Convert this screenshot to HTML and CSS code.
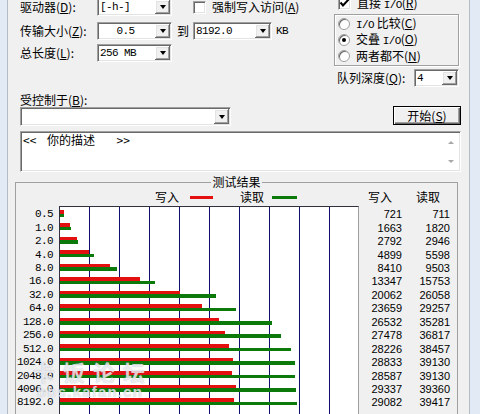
FILE: index.html
```html
<!DOCTYPE html>
<html>
<head>
<meta charset="utf-8">
<link rel="stylesheet" href="styles.css">
</head>
<body>
<div class="window">
  <div class="edge-l"></div>
  <div class="client">
    <div class="top">
      <div class="top-left">
        <div class="row">
          <span class="lbl">驱动器(<u>D</u>):</span>
          <div class="combo w75"><span class="val mono">[-h-]</span><span class="dd"></span></div>
          <label class="chk force"><span class="box"></span><span>强制写入访问(<u>A</u>)</span></label>
        </div>
        <div class="row r2">
          <span class="lbl">传输大小(<u>Z</u>):</span>
          <div class="combo w75"><span class="val mono center">0.5</span><span class="dd"></span></div>
          <span class="to">到</span>
          <div class="combo w79"><span class="val mono">8192.0</span><span class="dd"></span></div>
          <span class="kb mono">KB</span>
        </div>
        <div class="row r3">
          <span class="lbl">总长度(<u>L</u>):</span>
          <div class="combo w75"><span class="val mono">256 MB</span><span class="dd"></span></div>
        </div>
      </div>
      <div class="top-right">
        <label class="chk direct"><span class="box"><svg width="11" height="11" viewBox="0 0 11 11"><polyline points="1.5,4.5 4,7.5 9.5,1.5" fill="none" stroke="#000" stroke-width="2"/></svg></span><span>直接 <span class="mono">I/O</span>(<u>R</u>)</span></label>
        <div class="group">
          <div class="radio-row"><span class="radio"></span><span><span class="mono">I/O</span> 比较(<u>C</u>)</span></div>
          <div class="radio-row"><span class="radio on"></span><span>交叠 <span class="mono">I/O</span>(<u>O</u>)</span></div>
          <div class="radio-row"><span class="radio"></span><span>两者都不(<u>N</u>)</span></div>
        </div>
        <div class="queue">
          <span>队列深度(<u>Q</u>):</span>
          <div class="combo w45"><span class="val mono">4</span><span class="dd"></span></div>
        </div>
      </div>
    </div>

    <div class="ctl-label">受控制于(<u>B</u>):</div>
    <div class="ctl-row">
      <div class="combo w211"><span class="val"></span><span class="dd"></span></div>
      <div class="btn">开始(<u>S</u>)</div>
    </div>

    <div class="desc">
      <div class="desc-text">&lt;&lt;&nbsp;&nbsp;&nbsp;&nbsp;你的描述&nbsp;&nbsp;&nbsp;&nbsp;&nbsp;&nbsp;&nbsp;&nbsp;&gt;&gt;</div>
      <div class="vscroll"><span class="up"></span><span class="down"></span></div>
    </div>

    <fieldset class="results-box">
      <legend>测试结果</legend>
      <div class="hdr">
        <div class="hdr-lbl"></div>
        <div class="legend-row">
          <span>写入</span><span class="line w"></span>
          <span class="rd">读取</span><span class="line r"></span>
        </div>
        <div class="hdr-val">写入</div>
        <div class="hdr-val2">读取</div>
      </div>
      <div class="results">
        <div class="col-lbl mono">
          <div>0.5</div><div>1.0</div><div>2.0</div><div>4.0</div><div>8.0</div>
          <div>16.0</div><div>32.0</div><div>64.0</div><div>128.0</div><div>256.0</div>
          <div>512.0</div><div>1024.0</div><div>2048.0</div><div>4096.0</div><div>8192.0</div>
        </div>
        <div class="chart">
          <div class="bars"><i class="w" style="width:4.33px"></i><i class="r" style="width:4.27px"></i></div>
          <div class="bars"><i class="w" style="width:9.98px"></i><i class="r" style="width:10.92px"></i></div>
          <div class="bars"><i class="w" style="width:16.75px"></i><i class="r" style="width:17.68px"></i></div>
          <div class="bars"><i class="w" style="width:29.39px"></i><i class="r" style="width:33.59px"></i></div>
          <div class="bars"><i class="w" style="width:50.46px"></i><i class="r" style="width:57.02px"></i></div>
          <div class="bars"><i class="w" style="width:80.08px"></i><i class="r" style="width:94.52px"></i></div>
          <div class="bars"><i class="w" style="width:120.37px"></i><i class="r" style="width:156.35px"></i></div>
          <div class="bars"><i class="w" style="width:141.95px"></i><i class="r" style="width:175.54px"></i></div>
          <div class="bars"><i class="w" style="width:159.19px"></i><i class="r" style="width:211.69px"></i></div>
          <div class="bars"><i class="w" style="width:164.87px"></i><i class="r" style="width:220.9px"></i></div>
          <div class="bars"><i class="w" style="width:169.36px"></i><i class="r" style="width:230.74px"></i></div>
          <div class="bars"><i class="w" style="width:173px"></i><i class="r" style="width:234.78px"></i></div>
          <div class="bars"><i class="w" style="width:171.52px"></i><i class="r" style="width:234.78px"></i></div>
          <div class="bars"><i class="w" style="width:176.02px"></i><i class="r" style="width:236.16px"></i></div>
          <div class="bars"><i class="w" style="width:174.49px"></i><i class="r" style="width:236.5px"></i></div>
        </div>
        <div class="col-val">
          <div>721</div><div>1663</div><div>2792</div><div>4899</div><div>8410</div>
          <div>13347</div><div>20062</div><div>23659</div><div>26532</div><div>27478</div>
          <div>28226</div><div>28833</div><div>28587</div><div>29337</div><div>29082</div>
        </div>
        <div class="col-val col-val2">
          <div>711</div><div>1820</div><div>2946</div><div>5598</div><div>9503</div>
          <div>15753</div><div>26058</div><div>29257</div><div>35281</div><div>36817</div>
          <div>38457</div><div>39130</div><div>39130</div><div>39360</div><div>39417</div>
        </div>
      </div>
    </fieldset>
  </div>
  <div class="edge-r"></div>
  <div class="watermark">
    <div class="wm-cn">卡饭论坛</div>
    <div class="wm-en">bbs.kafan.cn</div>
  </div>
</div>
</body>
</html>
```

FILE: styles.css
```css
* { box-sizing: border-box; }
html, body { margin: 0; padding: 0; }
body {
  width: 480px; height: 414px; overflow: hidden;
  background: #f0f0f0;
  font-family: "Noto Sans CJK SC", "Liberation Sans", sans-serif;
  font-size: 12px; color: #000;
}
u { text-decoration: underline; text-underline-offset: 1px; }
.mono { font-family: "Liberation Mono", "Noto Sans CJK SC", monospace; font-size: 11px; letter-spacing: -0.6px; }

.window { display: flex; height: 414px; position: relative; overflow: hidden; }
.edge-l { flex: none; width: 8px; background: #e2eaf5; border-right: 1px solid #b4bcc8; }
.edge-r { flex: none; width: 11px; background: #e2eaf5; border-left: 1px solid #b4bcc8; }
.client { flex: 1; min-width: 0; display: flex; flex-direction: column; background: #f0f0f0; overflow: hidden; }
.client > * { flex-shrink: 0; }

/* top area */
.top { display: flex; margin-top: -2px; }
.top-left { margin-left: 12px; width: 314px; flex: none; }
.row { display: flex; align-items: center; height: 18px; line-height: 14px; white-space: nowrap; }
.r2 { margin-top: 6px; }
.r3 { margin-top: 4px; }
.lbl { width: 77px; flex: none; }
.to { width: 21px; padding-left: 5px; flex: none; }
.kb { margin-left: 4px; }

.combo {
  flex: none; height: 18px; display: flex; align-items: stretch;
  background: #fff; padding: 1px;
  border: 1px solid; border-color: #a0a0a0 #fff #fff #a0a0a0;
  box-shadow: inset 1px 1px 0 #696969, inset -1px -1px 0 #e3e3e3;
}
.w75 { width: 75px; }
.w79 { width: 79px; }
.w45 { width: 45px; }
.w211 { width: 211px; height: 19px; margin-top: 1px; }
.combo .val { flex: 1; line-height: 14px; padding-left: 1px; white-space: nowrap; }
.combo .val.center { text-align: center; padding-right: 4px; }
.dd {
  flex: none; width: 15px; background: #f0f0f0;
  display: flex; align-items: center; justify-content: center;
  box-shadow: inset -1px -1px 0 #696969, inset 1px 1px 0 #fff, inset -2px -2px 0 #a0a0a0, inset 2px 2px 0 #e3e3e3;
}
.dd::after {
  content: ""; width: 0; height: 0;
  border-left: 3.5px solid transparent; border-right: 3.5px solid transparent;
  border-top: 4px solid #000;
}

.chk { display: flex; align-items: center; gap: 6px; white-space: nowrap; line-height: 14px; }
.force { margin-left: 21px; }
.box {
  flex: none; width: 13px; height: 13px; background: #fff;
  border: 1px solid; border-color: #a0a0a0 #fff #fff #a0a0a0;
  box-shadow: inset 1px 1px 0 #696969, inset -1px -1px 0 #e3e3e3;
  display: flex; align-items: center; justify-content: center;
}
.box svg { display: block; }

.top-right { width: 126px; flex: none; display: flex; flex-direction: column; }
.direct { height: 13px; margin-top: -1px; margin-left: 4px; }
.group {
  margin-top: 4px; height: 52px; width: 125px;
  border: 1px solid #a0a0a0;
  box-shadow: 1px 1px 0 #fff, inset 1px 1px 0 #fff;
  padding: 1px 0 0 3px;
}
.radio-row { height: 16px; display: flex; align-items: center; gap: 6px; line-height: 14px; white-space: nowrap; }
.radio {
  flex: none; width: 12px; height: 12px; border-radius: 50%;
  background: #fff; border: 1px solid #a0a0a0;
  box-shadow: inset 1px 1px 0 #696969;
  display: flex; align-items: center; justify-content: center;
}
.radio.on::after { content: ""; width: 4px; height: 4px; border-radius: 50%; background: #000; }
.queue { margin-top: 3px; height: 18px; display: flex; align-items: center; padding-left: 3px; white-space: nowrap; line-height: 14px; }
.queue .combo { margin-left: auto; margin-right: 1px; }

/* controlled by */
.ctl-label { margin: 6px 0 0 12px; line-height: 13px; height: 13px; white-space: nowrap; }
.ctl-row { display: flex; margin: 0 8px 0 12px; height: 20px; }
.btn {
  margin-left: auto; width: 68px; height: 19px;
  display: flex; align-items: center; justify-content: center;
  line-height: 14px; background: #f0f0f0;
  border: 1px solid #000;
  box-shadow: inset 1px 1px 0 #fff, inset -1px -1px 0 #696969, inset -2px -2px 0 #a0a0a0;
}

/* description */
.desc {
  margin: 5px 8px 0 12px; height: 41px; display: flex;
  background: #fff;
  border: 1px solid; border-color: #a0a0a0 #fff #fff #a0a0a0;
  box-shadow: inset 1px 1px 0 #696969, inset -1px -1px 0 #e3e3e3;
  padding: 1px;
}
.desc-text { flex: 1; line-height: 14px; padding-left: 1px; white-space: nowrap; }
.vscroll { flex: none; width: 16px; display: flex; flex-direction: column; justify-content: space-between; align-items: center; padding: 8px 0 7px; }
.up, .down { width: 0; height: 0; border-left: 3.5px solid transparent; border-right: 3.5px solid transparent; }
.up { border-bottom: 3px solid #a8a8a8; }
.down { border-top: 3px solid #a8a8a8; }

/* results */
.results-box {
  margin: 3px 11px 0 7px; padding: 0; min-width: 0;
  border: 1px solid #a0a0a0;
}
.results-box legend { margin: 0 auto; padding: 0 1px; line-height: 14px; }
.hdr { display: flex; height: 14px; margin-top: 1px; line-height: 14px; white-space: nowrap; }
.hdr-lbl { width: 43px; flex: none; }
.legend-row { width: 300px; flex: none; display: flex; align-items: center; padding-left: 96px; }
.line { height: 3px; flex: none; }
.line.w { width: 23px; margin-left: 11px; background: #e41010; }
.rd { margin-left: 27px; }
.line.r { width: 25px; margin-left: 8px; background: #0b7a0b; }
.hdr-val { width: 43px; flex: none; text-align: right; padding-right: 10px; }
.hdr-val2 { width: 48px; flex: none; text-align: right; padding-right: 10px; }

.results { display: flex; margin-top: 2px; }
.col-lbl { width: 43px; flex: none; padding: 2.3px 6px 0 0; text-align: right; }
.col-lbl div, .col-val div { height: 13.45px; line-height: 13.45px; white-space: nowrap; }
.chart {
  width: 300px; height: 230px; flex: none;
  border: 1px solid; border-color: #303040 #a0a0a0 #a0a0a0 #303040;
  background: #fff repeating-linear-gradient(to right, transparent 0 29px, #101070 29px 30px);
  padding-top: 3px;
}
.bars { height: 13.45px; }
.bars i { display: block; height: 3.5px; }
.bars .w { background: #e41010; }
.bars .r { background: #0b7a0b; }
.col-val { width: 43px; flex: none; padding-top: 2.3px; text-align: right; font-family: "Liberation Sans", sans-serif; font-size: 11px; }
.col-val2 { width: 48px; }

/* watermark overlay */
.watermark { position: absolute; left: 33px; top: 358px; pointer-events: none; color: rgba(255,255,255,0.72); text-shadow: 0 0 1px rgba(110,120,150,0.55); }
.wm-cn { font-size: 22px; font-weight: bold; letter-spacing: 8px; line-height: 26px; }
.wm-en { margin-left: 4px; font-family: "Liberation Sans", sans-serif; font-size: 15px; font-weight: bold; letter-spacing: 1.2px; line-height: 16px; }
```
